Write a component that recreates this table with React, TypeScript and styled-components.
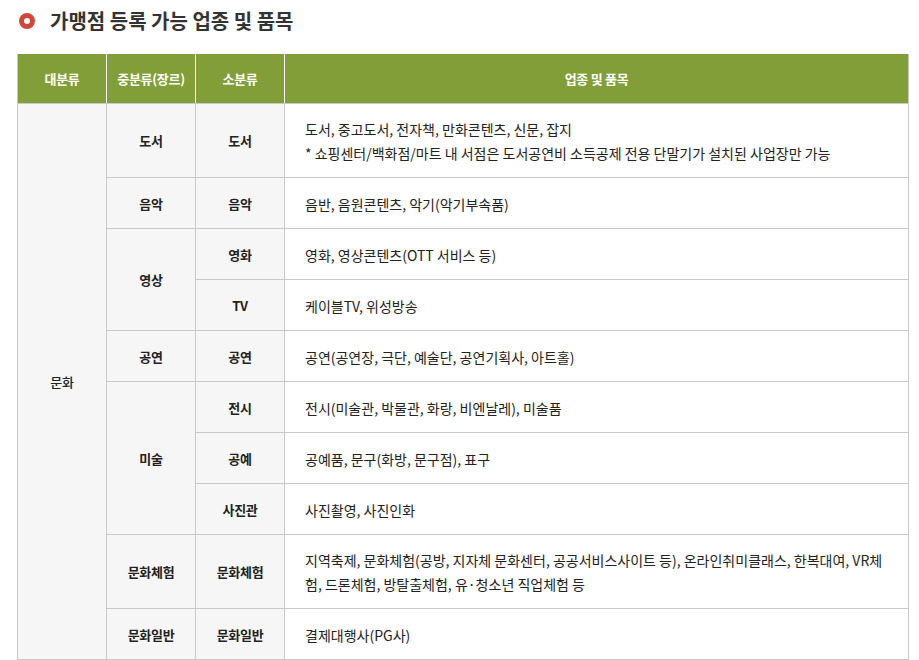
import * as React from 'react';
import styled, { createGlobalStyle } from 'styled-components';

const GlobalStyle = createGlobalStyle`
    body {
        margin: 0;
        background: #fff;
        font-family: "Noto Sans CJK KR", "Noto Sans", sans-serif;
        color: #222;
    }
`;

interface IRow {
    major?: { label: string; span: number };
    middle?: { label: string; span: number };
    minor: string;
    items: string[];
}

const rows: IRow[] = [
    {
        major: { label: '문화', span: 10 },
        middle: { label: '도서', span: 1 },
        minor: '도서',
        items: [
            '도서, 중고도서, 전자책, 만화콘텐츠, 신문, 잡지',
            '* 쇼핑센터/백화점/마트 내 서점은 도서공연비 소득공제 전용 단말기가 설치된 사업장만 가능',
        ],
    },
    { middle: { label: '음악', span: 1 }, minor: '음악', items: ['음반, 음원콘텐츠, 악기(악기부속품)'] },
    { middle: { label: '영상', span: 2 }, minor: '영화', items: ['영화, 영상콘텐츠(OTT 서비스 등)'] },
    { minor: 'TV', items: ['케이블TV, 위성방송'] },
    { middle: { label: '공연', span: 1 }, minor: '공연', items: ['공연(공연장, 극단, 예술단, 공연기획사, 아트홀)'] },
    { middle: { label: '미술', span: 3 }, minor: '전시', items: ['전시(미술관, 박물관, 화랑, 비엔날레), 미술품'] },
    { minor: '공예', items: ['공예품, 문구(화방, 문구점), 표구'] },
    { minor: '사진관', items: ['사진촬영, 사진인화'] },
    {
        middle: { label: '문화체험', span: 1 },
        minor: '문화체험',
        items: [
            '지역축제, 문화체험(공방, 지자체 문화센터, 공공서비스사이트 등), 온라인취미클래스, 한복대여, VR체험, 드론체험, 방탈출체험, 유·청소년 직업체험 등',
        ],
    },
    { middle: { label: '문화일반', span: 1 }, minor: '문화일반', items: ['결제대행사(PG사)'] },
];

export default function App() {
    return (
        <Page>
            <GlobalStyle />
            <Heading>
                <Bullet />
                <HeadingText>가맹점 등록 가능 업종 및 품목</HeadingText>
            </Heading>
            <Table>
                <colgroup>
                    <col style={{ width: 89 }} />
                    <col style={{ width: 89 }} />
                    <col style={{ width: 89 }} />
                    <col />
                </colgroup>
                <thead>
                    <tr>
                        <HeadCell>대분류</HeadCell>
                        <HeadCell>중분류(장르)</HeadCell>
                        <HeadCell>소분류</HeadCell>
                        <HeadCell>업종 및 품목</HeadCell>
                    </tr>
                </thead>
                <tbody>
                    {rows.map((row, i) => (
                        <tr key={i}>
                            {row.major && <LabelCell rowSpan={row.major.span} $plain>{row.major.label}</LabelCell>}
                            {row.middle && <LabelCell rowSpan={row.middle.span}>{row.middle.label}</LabelCell>}
                            <LabelCell>{row.minor}</LabelCell>
                            <ItemCell>
                                {row.items.map((t, j) => (
                                    <div key={j}>{t}</div>
                                ))}
                            </ItemCell>
                        </tr>
                    ))}
                </tbody>
            </Table>
        </Page>
    );
}

const Page = styled.div`
    padding: 9px 10px 0 17px;
    width: 892px;
`;

const Heading = styled.h2`
    display: flex;
    align-items: center;
    gap: 15px;
    margin: 0 0 21px 2px;
    height: 24px;
`;

const Bullet = styled.span`
    width: 16px;
    height: 16px;
    box-sizing: border-box;
    border-radius: 50%;
    border: 5px solid #d2463a;
    background: #fff;
`;

const HeadingText = styled.span`
    font-size: 20px;
    font-weight: 700;
    color: #333;
    line-height: 24px;
`;

const Table = styled.table`
    width: 892px;
    border-collapse: collapse;
    table-layout: fixed;
    font-size: 13px;
    border-left: 1px solid #c8c8c8;
    border-right: 1px solid #c8c8c8;
`;

const HeadCell = styled.th`
    height: 49px;
    padding: 0;
    background: #819e38;
    color: #fff;
    font-weight: 700;
    font-size: 13px;
    text-align: center;
    border-left: 1px solid #fff;
    border-bottom: 1px solid #c8c8c8;
    letter-spacing: -0.3px;
    &:first-child {
        border-left: none;
    }
`;

const LabelCell = styled.td<{ $plain?: boolean }>`
    height: 50px;
    padding: 0;
    text-align: center;
    font-weight: ${(p) => (p.$plain ? 500 : 700)};
    background: #f6f6f6;
    border: 1px solid #c8c8c8;
    color: #222;
    letter-spacing: -0.3px;
`;

const ItemCell = styled.td`
    padding: 13px 20px 12px 20px;
    font-size: 14px;
    line-height: 24px;
    border: 1px solid #c8c8c8;
    color: #222;
`;
